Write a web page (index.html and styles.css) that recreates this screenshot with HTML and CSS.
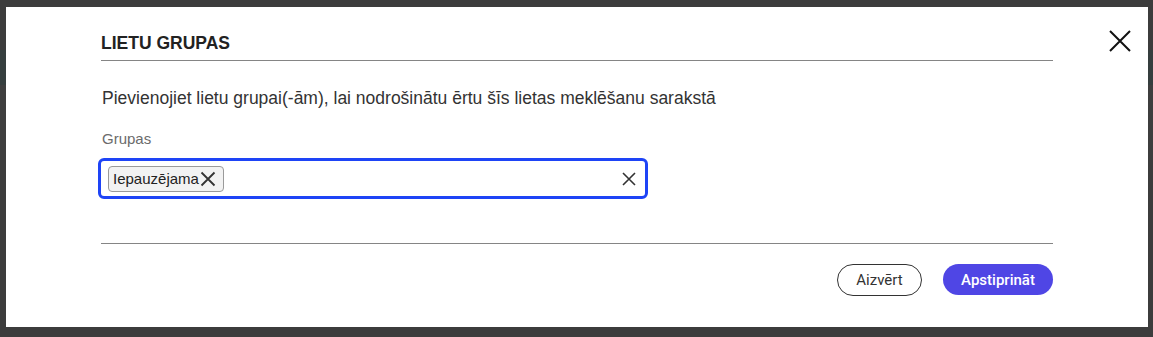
FILE: index.html
```html
<!DOCTYPE html>
<html lang="lv">
<head>
<meta charset="utf-8">
<title>Lietu grupas</title>
<link rel="stylesheet" href="styles.css">
</head>
<body>
<div class="overlay">
  <div class="dialog" role="dialog">
    <button class="close" aria-label="Aizvērt">
      <svg width="22" height="22" viewBox="0 0 22 22"><path d="M1 1L21 21M21 1L1 21" stroke="#111" stroke-width="2" fill="none"/></svg>
    </button>
    <h2 class="title">LIETU GRUPAS</h2>
    <p class="desc">Pievienojiet lietu grupai(-ām), lai nodrošinātu ērtu šīs lietas meklēšanu sarakstā</p>
    <label class="label">Grupas</label>
    <div class="select">
      <span class="tag">Iepauzējama<svg class="tag-x" width="16" height="16" viewBox="0 0 16 16"><path d="M1.5 1.5L14.5 14.5M14.5 1.5L1.5 14.5" stroke="#333" stroke-width="1.8" fill="none"/></svg></span>
      <span class="spacer"></span>
      <svg class="clear" width="14" height="14" viewBox="0 0 14 14"><path d="M1 1L13 13M13 1L1 13" stroke="#333" stroke-width="1.6" fill="none"/></svg>
    </div>
    <hr class="divider">
    <div class="actions">
      <button class="btn outline">Aizvērt</button>
      <button class="btn primary">Apstiprināt</button>
    </div>
  </div>
</div>
</body>
</html>
```
FILE: styles.css
```css
html, body {
  margin: 0;
  padding: 0;
}
body {
  width: 1153px;
  height: 337px;
  overflow: hidden;
  background: linear-gradient(to bottom, #3c3c3c 0, #3c3c3c 50px, #353e3e 50px, #353e3e 85px, #3e3e3e 85px, #3e3e3e 160px, #3c3c3c 160px);
  font-family: "Liberation Sans", Arial, sans-serif;
}
.overlay {
  padding: 7px 5px 10px 6px;
}
.dialog {
  position: relative;
  width: 1142px;
  height: 320px;
  box-sizing: border-box;
  background: #fff;
  padding: 26px 95px 0 95px;
  display: flex;
  flex-direction: column;
}
.close {
  position: absolute;
  top: 22px;
  right: 16px;
  width: 24px;
  height: 24px;
  padding: 1px;
  border: 0;
  background: transparent;
  display: flex;
  align-items: center;
  justify-content: center;
}
.title {
  margin: 0;
  font-size: 17.5px;
  line-height: 20px;
  font-weight: 700;
  color: #222;
  padding-bottom: 7px;
  border-bottom: 1px solid #858585;
}
.desc {
  margin: 27px 0 0 1px;
  font-size: 17.5px;
  line-height: 20px;
  color: #333;
}
.label {
  display: block;
  margin: 22px 0 0 1px;
  font-size: 15px;
  line-height: 18px;
  color: #6b6b6b;
}
.select {
  margin-top: 10px;
  margin-left: -3px;
  width: 550px;
  height: 41px;
  box-sizing: border-box;
  border: 3px solid #1e44f6;
  border-radius: 6px;
  display: flex;
  align-items: center;
  padding: 0 9px 0 7px;
}
.tag {
  display: flex;
  align-items: center;
  height: 26px;
  box-sizing: border-box;
  border: 1px solid #9a9a9a;
  border-radius: 4px;
  background: #f2f2f2;
  padding: 0 7px 0 4px;
  font-size: 15px;
  color: #222;
}
.tag-x {
  margin-left: 1px;
}
.spacer {
  flex: 1;
}
.divider {
  margin: 44px 0 0 0;
  border: 0;
  height: 1px;
  background: #858585;
}
.actions {
  margin-top: 20px;
  display: flex;
  justify-content: flex-end;
  gap: 21px;
}
.btn {
  font-family: Roboto, "Liberation Sans", sans-serif;
  font-size: 15px;
  height: 32px;
  border-radius: 16px;
  box-sizing: border-box;
  cursor: pointer;
}
.outline {
  width: 85px;
  background: #fff;
  border: 1px solid #333;
  color: #333;
}
.primary {
  width: 110px;
  height: 31px;
  background: #4f46e5;
  border: 0;
  color: #fff;
  font-weight: 500;
}
```
